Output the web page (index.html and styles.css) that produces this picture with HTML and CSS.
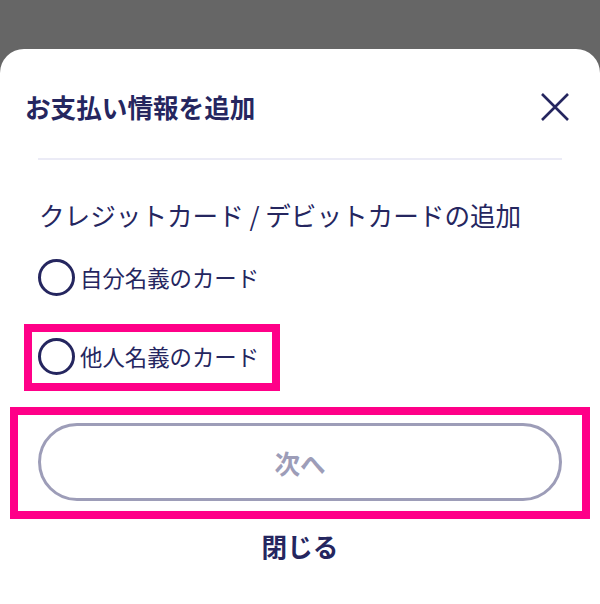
FILE: index.html
```html
<!DOCTYPE html>
<html lang="ja">
<head>
<meta charset="utf-8">
<title>お支払い情報を追加</title>
<link rel="stylesheet" href="styles.css">
</head>
<body>
<div class="backdrop"></div>
<div class="sheet">
  <div class="header">
    <h1 class="title">お支払い情報を追加</h1>
    <button class="close" aria-label="閉じる">
      <svg width="28" height="28" viewBox="0 0 28 28"><path d="M1 1 L27 27 M27 1 L1 27" stroke="#25265f" stroke-width="2.6" fill="none"/></svg>
    </button>
  </div>
  <hr class="divider">
  <div class="subtitle">クレジットカード / デビットカードの追加</div>
  <label class="radio-row first"><span class="radio"></span><span class="label">自分名義のカード</span></label>
  <label class="radio-row second"><span class="radio"></span><span class="label">他人名義のカード</span></label>
  <button class="next">次へ</button>
  <div class="close-link">閉じる</div>
</div>
<div class="mark mark-1"></div>
<div class="mark mark-2"></div>
</body>
</html>
```
FILE: styles.css
```css
html, body {
  margin: 0;
  padding: 0;
  background: #666666;
  font-family: "Noto Sans CJK JP", "Noto Sans", sans-serif;
  color: #25265f;
}
body {
  position: relative;
  width: 600px;
  height: 604px;
  overflow: hidden;
}
.backdrop {
  height: 49px;
}
.sheet {
  background: #ffffff;
  border-radius: 24px 24px 0 0;
  height: 555px;
  display: flex;
  flex-direction: column;
}
.header {
  display: flex;
  justify-content: space-between;
  align-items: center;
  padding: 40px 31px 0 25px;
  height: 36px;
}
.title {
  margin: 0;
  font-size: 25.6px;
  font-weight: 700;
  line-height: 36px;
  color: #25265f;
}
.close {
  border: 0;
  background: none;
  padding: 0;
  width: 28px;
  height: 28px;
  display: flex;
}
.divider {
  margin: 33px 38px 0;
  border: 0;
  height: 2px;
  background: #ebebf6;
}
.subtitle {
  margin: 37px 0 0 39px;
  font-size: 25.6px;
  line-height: 36px;
  color: #25265f;
}
.radio-row {
  display: flex;
  align-items: center;
  height: 50px;
  margin-left: 38px;
}
.radio-row.first { margin-top: 19px; }
.radio-row.second { margin-top: 29px; }
.radio {
  box-sizing: border-box;
  width: 37px;
  height: 37px;
  border: 3px solid #25265f;
  border-radius: 50%;
  flex: none;
}
.label {
  margin-left: 5px;
  font-size: 22.4px;
  line-height: 32px;
  color: #25265f;
}
.next {
  box-sizing: border-box;
  margin: 42px 38px 0;
  height: 78px;
  border: 3px solid #9d9db8;
  border-radius: 39px;
  background: #ffffff;
  color: #9d9db8;
  font-family: inherit;
  font-size: 25.6px;
  font-weight: 700;
}
.close-link {
  margin-top: 27px;
  text-align: center;
  font-size: 25.6px;
  font-weight: 700;
  line-height: 36px;
  color: #25265f;
}
.mark {
  position: absolute;
  box-sizing: border-box;
  border: 8px solid #ff0088;
}
.mark-1 {
  left: 24px;
  top: 324px;
  width: 256px;
  height: 67px;
}
.mark-2 {
  left: 10px;
  top: 407px;
  width: 580px;
  height: 112px;
}
```
